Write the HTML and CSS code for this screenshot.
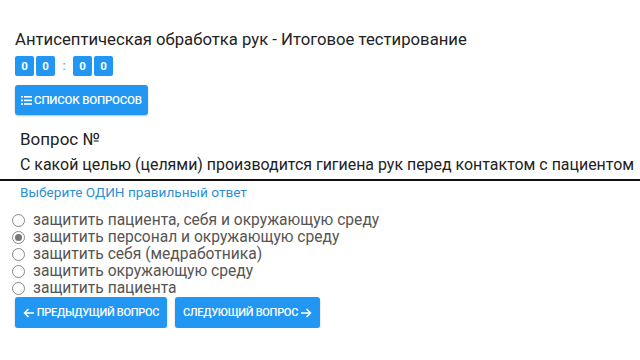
FILE: index.html
```html
<!DOCTYPE html>
<html lang="ru">
<head>
<meta charset="utf-8">
<link rel="stylesheet" href="styles.css">
</head>
<body>
<div class="page">
  <h1 class="title">Антисептическая обработка рук - Итоговое тестирование</h1>
  <div class="timer">
    <span class="digit">0</span><span class="digit">0</span><span class="colon">:</span><span class="digit">0</span><span class="digit">0</span>
  </div>
  <button class="btn btn-list"><svg class="ico" width="11" height="9" viewBox="0 0 11 9"><rect x="0" y="0" width="2" height="1.6" fill="#fff"/><rect x="3" y="0" width="8" height="1.6" fill="#fff"/><rect x="0" y="3.6" width="2" height="1.6" fill="#fff"/><rect x="3" y="3.6" width="8" height="1.6" fill="#fff"/><rect x="0" y="7.2" width="2" height="1.6" fill="#fff"/><rect x="3" y="7.2" width="8" height="1.6" fill="#fff"/></svg>СПИСОК ВОПРОСОВ</button>
  <div class="question">
    <div class="qnum">Вопрос №</div>
    <div class="qtext">С какой целью (целями) производится гигиена рук перед контактом с пациентом</div>
  </div>
</div>
<hr class="rule">
<div class="answers">
  <div class="hint">Выберите ОДИН правильный ответ</div>
  <label class="opt"><span class="radio"></span>защитить пациента, себя и окружающую среду</label>
  <label class="opt"><span class="radio checked"></span>защитить персонал и окружающую среду</label>
  <label class="opt"><span class="radio"></span>защитить себя (медработника)</label>
  <label class="opt"><span class="radio"></span>защитить окружающую среду</label>
  <label class="opt"><span class="radio"></span>защитить пациента</label>
  <div class="nav">
    <button class="btn btn-nav btn-prev"><svg class="arrow" width="12" height="10" viewBox="0 0 12 10"><path d="M11 5H1.5M5.5 1L1.5 5l4 4" stroke="#fff" stroke-width="1.5" fill="none"/></svg>ПРЕДЫДУЩИЙ ВОПРОС</button>
    <button class="btn btn-nav btn-next">СЛЕДУЮЩИЙ ВОПРОС<svg class="arrow right" width="12" height="10" viewBox="0 0 12 10"><path d="M1 5h9.5M6.5 1l4 4-4 4" stroke="#fff" stroke-width="1.5" fill="none"/></svg></button>
  </div>
</div>
</body>
</html>
```
FILE: styles.css
```css
* { box-sizing: border-box; }
html, body { margin: 0; padding: 0; background: #fff; }
body { font-family: Roboto, "Noto Sans", sans-serif; color: #222; }
.page { padding: 29px 15px 0 15px; }
.title { margin: 0; font-size: 16.7px; font-weight: 400; line-height: 21px; color: #222; }
.timer { display: flex; align-items: center; margin-top: 5px; height: 21px; }
.digit { width: 19px; height: 20px; background: #2196f3; color: #fff; font-size: 11.5px; font-weight: 700; display: flex; align-items: center; justify-content: center; border-radius: 2px; margin-right: 2px; }
.colon { color: #5a8fc0; font-size: 13px; width: 16px; text-align: center; margin-left: -1px; margin-right: 1px; }
.btn { font-family: Roboto, sans-serif; border: none; background: #2196f3; color: #fff; border-radius: 3px; box-shadow: 0 1px 2px rgba(0,0,0,0.25); font-size: 11.5px; font-weight: 500; display: inline-flex; align-items: center; justify-content: center; padding: 0; }
.btn-list { margin-top: 9px; height: 30px; width: 133px; letter-spacing: -0.2px; }
.ico { margin-right: 2px; }
.question { padding-left: 5px; margin-top: 12px; }
.qnum { font-size: 17px; line-height: 24px; }
.qtext { font-size: 15.95px; line-height: 24px; margin-top: 2px; white-space: nowrap; }
.rule { margin: 2px 0 0 0; border: none; border-top: 2px solid #111; }
.answers { padding: 0 0 0 12px; }
.hint { color: #2b8fd6; font-size: 13.6px; line-height: 18px; margin: 2px 0 0 8px; }
.opt { display: flex; align-items: center; font-size: 15.6px; line-height: 17px; color: #555; height: 17px; }
.opt:first-of-type { margin-top: 11px; }
.radio { width: 13px; height: 13px; border: 1px solid #888; border-radius: 50%; margin-right: 8px; display: inline-flex; align-items: center; justify-content: center; background: #fff; flex: none; }
.radio.checked::after { content: ""; width: 7px; height: 7px; border-radius: 50%; background: #777; }
.nav { display: flex; gap: 8px; margin: 0 0 0 3px; }
.btn-nav { height: 31px; font-size: 11px; letter-spacing: -0.3px; }
.btn-prev { width: 152px; }
.btn-next { width: 145px; }
.arrow { margin-right: 2px; }
.arrow.right { margin-right: 0; margin-left: 2px; }
```
